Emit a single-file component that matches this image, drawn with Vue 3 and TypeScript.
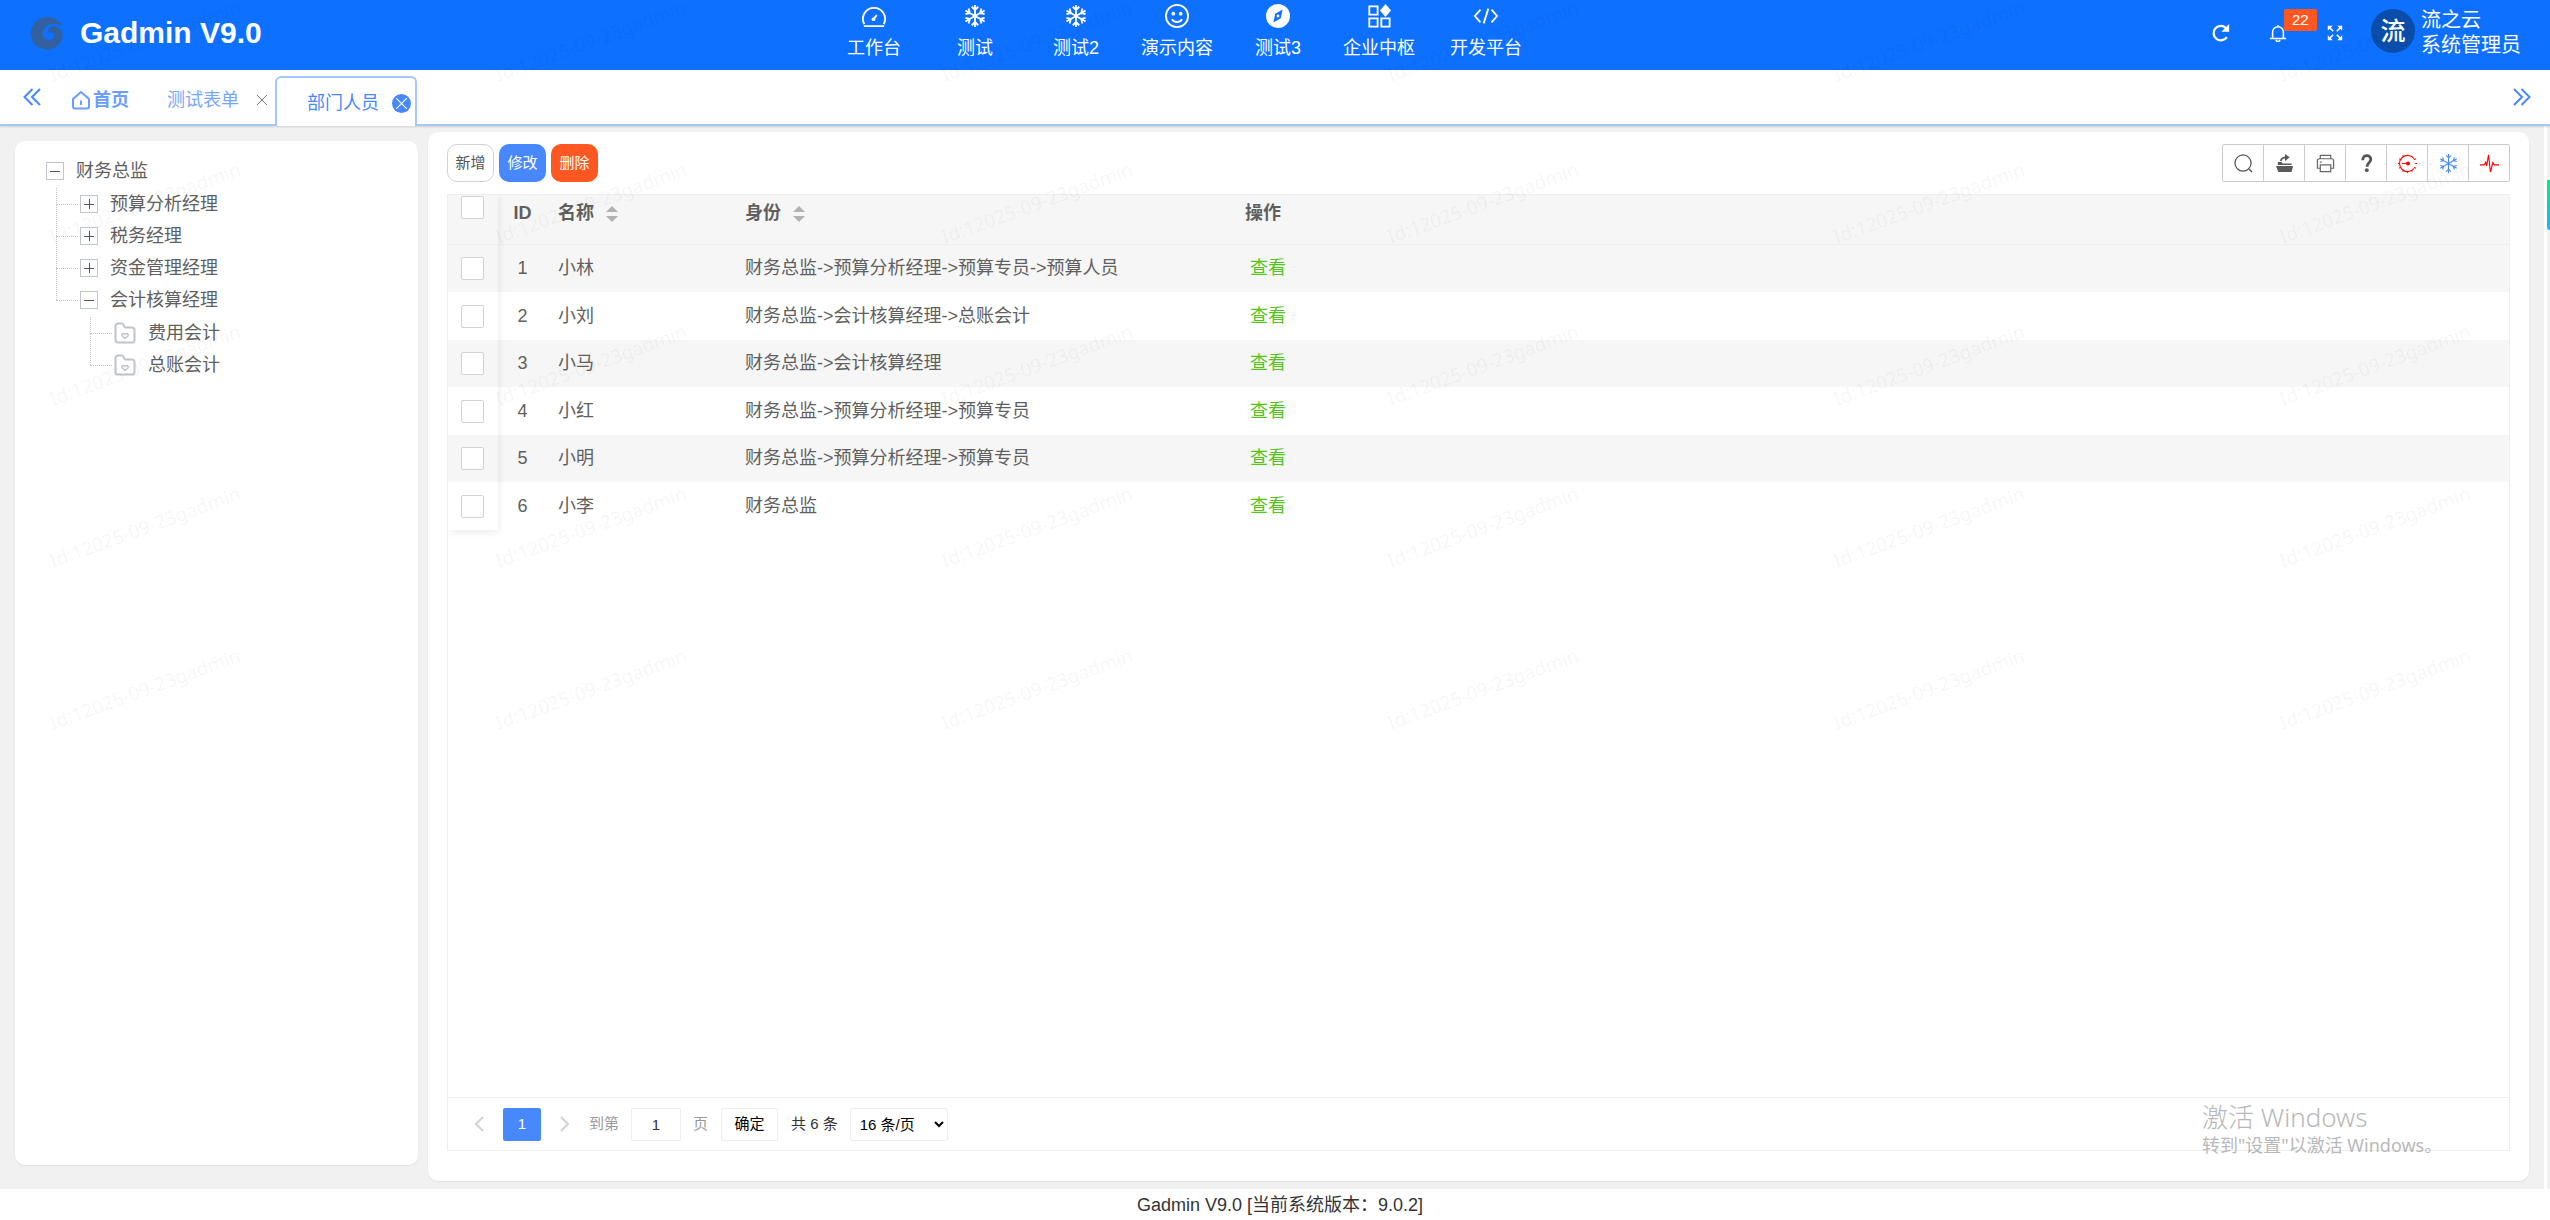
<script setup lang="ts">
import { ref } from 'vue'

interface NavItem { label: string; icon: string }
interface TreeNode { label: string; open?: boolean; children?: TreeNode[] }
interface Person { id: number; name: string; role: string }

const nav: NavItem[] = [
  { label: '工作台', icon: 'gauge' },
  { label: '测试', icon: 'snow' },
  { label: '测试2', icon: 'snow' },
  { label: '演示内容', icon: 'smile' },
  { label: '测试3', icon: 'compass' },
  { label: '企业中枢', icon: 'blocks' },
]

const tree: TreeNode = {
  label: '财务总监',
  open: true,
  children: [
    { label: '预算分析经理' },
    { label: '税务经理' },
    { label: '资金管理经理' },
    { label: '会计核算经理', open: true, children: [{ label: '费用会计' }, { label: '总账会计' }] },
  ],
}

const people: Person[] = [
  { id: 1, name: '小林', role: '财务总监->预算分析经理->预算专员->预算人员' },
  { id: 2, name: '小刘', role: '财务总监->会计核算经理->总账会计' },
  { id: 3, name: '小马', role: '财务总监->会计核算经理' },
  { id: 4, name: '小红', role: '财务总监->预算分析经理->预算专员' },
  { id: 5, name: '小明', role: '财务总监->预算分析经理->预算专员' },
  { id: 6, name: '小李', role: '财务总监' },
]

const page = ref(1)
const pageSize = ref('16')
const flakeArms = [0, 60, 120, 180, 240, 300]
const dialTicks = [40, 70, 100, 130, 160, 190, 220, 250, 280, 310]
</script>

<template>
  <div class="app">
    <header class="topbar">
      <div class="brand">
        <svg class="logo" viewBox="0 0 34 34" aria-hidden="true">
          <path fill="#33619f" d="M33 11C29 3 20-1 12 2 4 5-1 13 1 21c2 9 11 14 20 12 8-2 13-9 11-16-1-5-6-8-11-6-3 1-4 5-1 6 1-1 3-1 4 1 1 3-1 6-5 6-4 0-7-4-6-8 1-6 7-9 13-8 3 0 6 2 7 3z" />
        </svg>
        <h1>Gadmin V9.0</h1>
      </div>

      <nav class="mainnav">
        <ul>
          <li v-for="n in nav" :key="n.label">
            <a href="#">
              <svg v-if="n.icon === 'gauge'" viewBox="0 0 28 26" aria-hidden="true">
                <path class="ln" d="M3.500 22A12 12 0 1 1 24.500 22M3 24h22M13 17l4-5" />
                <circle cx="13.500" cy="16.500" r="2" fill="currentColor" />
              </svg>
              <svg v-else-if="n.icon === 'snow'" viewBox="0 0 28 26" aria-hidden="true">
                <g v-for="a in flakeArms" :key="a" :transform="`rotate(${a} 14 13)`">
                  <path class="ln" d="M14 13V1M10.500 3l3.500 3.500L17.500 3" />
                </g>
              </svg>
              <svg v-else-if="n.icon === 'smile'" viewBox="0 0 28 26" aria-hidden="true">
                <circle class="ln" cx="14" cy="13" r="12" />
                <path class="ln" d="M8.500 16.500c2.500 4 8.500 4 11 0" />
                <circle cx="10" cy="10.500" r="2" fill="currentColor" />
                <circle cx="18" cy="10.500" r="2" fill="currentColor" />
              </svg>
              <svg v-else-if="n.icon === 'compass'" viewBox="0 0 28 26" aria-hidden="true">
                <path fill="currentColor" fill-rule="evenodd" d="M14 0a13 13 0 1 0 0 26 13 13 0 0 0 0-26zM19 6l-2 9.500L9 20 11 10.500zM14 11.500a1.500 1.500 0 1 1 0 3 1.500 1.500 0 0 1 0-3z" />
              </svg>
              <svg v-else viewBox="0 0 28 26" aria-hidden="true">
                <path class="ln" d="M3.500 2.500h9v9h-9zM3.500 15.500h9v9h-9zM16.500 15.500h9v9h-9z" />
                <path fill="currentColor" d="M21 0l6 7-6 7-6-7z" />
              </svg>
              <span>{{ n.label }}</span>
            </a>
          </li>
        </ul>
        <a href="#" class="platform">
          <svg viewBox="0 0 28 26" aria-hidden="true">
            <path class="ln" d="M8 6l-6 7 6 7M20 6l6 7-6 7M16.500 5l-5 16" />
          </svg>
          <span>开发平台</span>
        </a>
      </nav>

      <div class="tools">
        <button type="button" aria-label="刷新">
          <svg viewBox="0 0 20 20"><path d="M16.500 14.500A8 8 0 1 1 15.500 4.500" fill="none" stroke="currentColor" stroke-width="2.500" /><path d="M19 0v8.500h-8.500z" fill="currentColor" /></svg>
        </button>
        <button type="button" class="bell" aria-label="消息">
          <svg viewBox="0 0 20 20"><path d="M4 16V9a6 6 0 0 1 12 0v7M1 16.200h18M8 17.500a2 2 0 0 0 4 0M10 3V1" fill="none" stroke="currentColor" stroke-width="1.700" /></svg>
          <span class="badge">22</span>
        </button>
        <button type="button" aria-label="全屏">
          <svg viewBox="0 0 20 20"><path d="M8 8L3 3M12 8l5-5M8 12l-5 5M12 12l5 5" stroke="currentColor" stroke-width="1.800" /><path d="M2 2h5.500L2 7.500zM18 2h-5.500L18 7.500zM2 18h5.500L2 12.500zM18 18h-5.500l5.500-5.500z" fill="currentColor" /></svg>
        </button>
      </div>
      <a href="#" class="user">
        <span class="avatar">流</span>
        <span class="who"><span>流之云</span><span>系统管理员</span></span>
      </a>
    </header>

    <div class="tabs">
      <button type="button" class="scroll" aria-label="向左">
        <svg viewBox="0 0 18 18"><path d="M9.500 1l-8 8 8 8M17 1L9 9l8 8" /></svg>
      </button>
      <div class="tablist">
        <a href="#" class="home">
          <svg viewBox="0 0 20 20" aria-hidden="true"><path d="M2 9l8-7 8 7v7.500a2 2 0 0 1-2 2H4a2 2 0 0 1-2-2zM10 10.500v4.500" /></svg>
          <span>首页</span>
        </a>
        <div class="tab">
          <a href="#">测试表单</a>
          <button type="button" class="x" aria-label="关闭测试表单"><svg viewBox="0 0 10 10"><path d="M0 0l10 10M10 0L0 10" /></svg></button>
        </div>
        <div class="tab active">
          <a href="#">部门人员</a>
          <button type="button" class="x" aria-label="关闭部门人员"><svg viewBox="0 0 10 10"><path d="M0 0l10 10M10 0L0 10" /></svg></button>
        </div>
      </div>
      <button type="button" class="scroll" aria-label="向右">
        <svg viewBox="0 0 18 18"><path d="M1 1l8 8-8 8M8.500 1l8 8-8 8" /></svg>
      </button>
    </div>

    <main class="body">
      <aside class="side">
        <div class="row">
          <button type="button" class="toggle open" :aria-label="tree.label"></button>
          <span>{{ tree.label }}</span>
        </div>
        <ul class="branch">
          <li v-for="node in tree.children" :key="node.label">
            <div class="row">
              <button type="button" class="toggle" :class="{ open: node.open }" :aria-label="node.label"></button>
              <span>{{ node.label }}</span>
            </div>
            <ul v-if="node.children" class="branch">
              <li v-for="leaf in node.children" :key="leaf.label">
                <div class="row">
                  <svg class="folder" viewBox="0 0 22 22" aria-hidden="true">
                    <path stroke-width="2" d="M1.500 4a2.500 2.500 0 0 1 2.500-2.500h4.500l2.500 4h7a2.500 2.500 0 0 1 2.500 2.500v10a2.500 2.500 0 0 1-2.500 2.500H4A2.500 2.500 0 0 1 1.500 18z" />
                    <path stroke-width="1.500" d="M11 16.500l-3-2.800c-1-1.800 1.500-3 3-1.200 1.500-1.800 4-.6 3 1.200z" />
                  </svg>
                  <span>{{ leaf.label }}</span>
                </div>
              </li>
            </ul>
          </li>
        </ul>
      </aside>

      <section class="panel">
        <div class="actions">
          <div class="btns">
            <button type="button" class="btn plain">新增</button>
            <button type="button" class="btn blue">修改</button>
            <button type="button" class="btn red">删除</button>
          </div>
          <div class="icons">
            <button type="button" aria-label="搜索"><svg viewBox="0 0 20 20"><circle cx="9.500" cy="9.500" r="8.500" fill="none" stroke="#555" stroke-width="1.300" /><path d="M16 16l3 3" stroke="#555" stroke-width="1.500" /></svg></button>
            <button type="button" aria-label="导出"><svg viewBox="0 0 20 20"><path fill="#5a5a5a" d="M1 12.500h18L17.500 19h-14zM3 11.500V8.500h4l1 1.500h9.500v1.500z" /><path d="M6 7.500c.5-3 2.500-4 6-4" fill="none" stroke="#5a5a5a" stroke-width="1.800" /><path fill="#5a5a5a" d="M10.500 0l5 3.500-5 4z" /></svg></button>
            <button type="button" aria-label="打印"><svg viewBox="0 0 20 20" fill="none" stroke="#666" stroke-width="1.300"><path d="M4.500 5V1.500h11V5M4.500 15H1.500V7a2 2 0 0 1 2-2h13a2 2 0 0 1 2 2v8h-3M4.500 11.500h11v7h-11zM4 8.500h2" /></svg></button>
            <button type="button" aria-label="帮助"><svg viewBox="0 0 20 20"><path d="M6 6.500C6 0 15 .5 14.500 6c-.3 3-4 3.500-4 7.500" fill="none" stroke="#555" stroke-width="3" /><circle cx="10.300" cy="17" r="2" fill="#555" /></svg></button>
            <button type="button" aria-label="仪表"><svg viewBox="0 0 20 20" fill="none" stroke="#f00" stroke-width="1.200"><path d="M17 5A8.500 8.500 0 1 0 17 15M4 10h6" /><path v-for="t in dialTicks" :key="t" d="M10 0v2" :transform="`rotate(${-t + 10} 10 10)`" /><circle cx="10.500" cy="10" r="1.500" fill="#f00" /></svg></button>
            <button type="button" aria-label="雪花"><svg viewBox="0 0 20 20" fill="none" stroke="#4788ff" stroke-width="1.200"><g v-for="a in flakeArms" :key="a" :transform="`rotate(${a} 10 10)`"><path d="M10 10V0M7.500 1.500L10 4l2.500-2.500" /></g></svg></button>
            <button type="button" aria-label="监控"><svg viewBox="0 0 20 20" fill="none" stroke="#f00" stroke-width="1.200"><path d="M0 11.500h4.500L6 8.500l1 4L9 1l2 18 2.500-10 1.500 2.500h5" /></svg></button>
          </div>
        </div>

        <div class="grid">
          <div class="gridbody">
            <table>
              <colgroup><col class="c1" /><col class="c2" /><col class="c3" /><col class="c4" /><col /></colgroup>
              <thead>
                <tr>
                  <th class="pick"><input type="checkbox" aria-label="全选" /></th>
                  <th class="num">ID</th>
                  <th>名称<i class="sort"></i></th>
                  <th>身份<i class="sort"></i></th>
                  <th>操作</th>
                </tr>
              </thead>
              <tbody>
                <tr v-for="p in people" :key="p.id">
                  <td class="pick"><input type="checkbox" :aria-label="p.name" /></td>
                  <td class="num">{{ p.id }}</td>
                  <td>{{ p.name }}</td>
                  <td>{{ p.role }}</td>
                  <td><a href="#" class="view">查看</a></td>
                </tr>
              </tbody>
            </table>
            <div class="pinshade"></div>
          </div>
          <div class="pager">
            <button type="button" class="arrow" aria-label="上一页"><svg viewBox="0 0 10 16"><path d="M9 1L2 8l7 7" /></svg></button>
            <button type="button" class="current">1</button>
            <button type="button" class="arrow" aria-label="下一页"><svg viewBox="0 0 10 16"><path d="M1 1l7 7-7 7" /></svg></button>
            <label for="goto">到第</label>
            <input id="goto" v-model="page" type="text" />
            <label for="goto">页</label>
            <button type="button" class="ok">确定</button>
            <span class="total">共 6 条</span>
            <select v-model="pageSize" aria-label="每页条数"><option value="16">16 条/页</option></select>
          </div>
        </div>
      </section>
      <div class="rail"><span></span></div>
    </main>

    <footer>Gadmin V9.0 [当前系统版本：9.0.2]</footer>

    <div class="marks" aria-hidden="true"><span v-for="i in 30" :key="i">Id:12025-09-23gadmin</span></div>
    <div class="activate"><strong>激活 Windows</strong><span>转到"设置"以激活 Windows。</span></div>
  </div>
</template>

<style>
body { margin: 0; }
</style>

<style scoped>
* { box-sizing: border-box; }
.app {
  position: relative;
  display: flex;
  flex-direction: column;
  min-height: 100vh;
  overflow: hidden;
  background: #fff;
  color: #5f5f5f;
  font-family: "Liberation Sans", "Noto Sans CJK SC", sans-serif;
  font-size: 18px;
  font-weight: 400;
  line-height: 24px;
}
button, input, select { font: inherit; }
button { padding: 0; border: 0; background: none; color: inherit; }
a { color: inherit; text-decoration: none; }
ul { margin: 0; padding: 0; list-style: none; }
svg { display: block; }

.topbar { display: flex; align-items: center; height: 70px; background: #0e70ff; color: #fff; }
.brand { display: flex; flex: 1; align-items: center; gap: 16px; padding: 0 0 4px 30px; }
.logo { width: 34px; height: 34px; }
h1 { margin: 0; font-size: 30px; line-height: 40px; font-weight: 700; }
.mainnav { display: flex; gap: 6px; }
.mainnav ul { display: flex; }
.mainnav a { display: flex; flex-direction: column; align-items: center; width: 101px; height: 70px; padding-top: 4px; }
.mainnav svg { width: 26px; height: 24px; }
.mainnav span { margin-top: 8px; }
.ln { fill: none; stroke: currentColor; stroke-width: 2; }
.tools { display: flex; flex: 1; justify-content: flex-end; gap: 39px; padding: 0 27px 4px 14px; }
.tools button { position: relative; width: 18px; }
.tools svg { width: 18px; height: 18px; }
.badge { position: absolute; left: 15px; top: -15px; padding: 0 8px; border-radius: 2px; background: #ff5722; font-size: 15px; line-height: 22px; }
.user { display: flex; align-items: center; gap: 6px; padding: 0 29px 8px 0; }
.avatar { width: 44px; height: 44px; border-radius: 50%; background: #0b4daa; text-align: center; font-size: 25px; line-height: 44px; font-weight: 500; }
.who { display: flex; flex-direction: column; padding-top: 4px; font-size: 20px; line-height: 25px; }

.tabs { display: flex; height: 56px; padding: 0 14px 0 18px; border-bottom: 2px solid #a6c6ff; box-shadow: 0 1px 2px #0002; background: #fff; color: #4788ff; z-index: 1; }
.scroll { width: 28px; height: 54px; padding: 0 5px; }
.scroll svg { width: 18px; height: 18px; fill: none; stroke: currentColor; stroke-width: 2; }
.tablist { display: flex; flex: 1; align-items: flex-end; }
.home { display: flex; align-items: center; gap: 2px; height: 48px; width: 110px; padding-left: 25px; color: #6a9dff; font-weight: 700; }
.home svg { width: 20px; height: 20px; fill: none; stroke: currentColor; stroke-width: 2; }
.tab { display: flex; align-items: center; justify-content: space-between; width: 119px; height: 48px; padding: 0 8px 0 11px; color: #78a6ff; }
.tab .x { color: #777; }
.x svg { width: 10px; height: 10px; fill: none; stroke: currentColor; stroke-width: 1; }
.active { width: 142px; height: 50px; margin-bottom: -2px; padding: 2px 4px 0 30px; border: 2px solid #a6c6ff; border-bottom: 0; border-radius: 6px 6px 0 0; background: #fff; color: #4788ff; }
.active .x { width: 19px; height: 19px; padding: 4px; border-radius: 50%; background: #4788ff; color: #fff; }
.active .x svg { width: 11px; height: 11px; }

.body { display: flex; flex: 1; padding: 0 0 0 15px; background: #f1f1f1; }
.side { width: 403px; margin: 15px 10px 24px 0; padding: 14px 31px; border-radius: 10px; background: #fff; box-shadow: 0 1px 2px #0001; }
.row { display: flex; align-items: center; gap: 12px; height: 32px; }
.toggle { width: 18px; height: 18px; border: 1px solid #c0c4cc; background: linear-gradient(#555, #555) center / 10px 1px no-repeat, linear-gradient(#555, #555) center / 1px 10px no-repeat; }
.toggle.open { background: linear-gradient(#555, #555) center / 10px 1px no-repeat; }
.branch { padding: 1px 0 0 34px; }
.branch li { position: relative; }
.branch li::before { content: ""; position: absolute; left: -24px; top: -16px; height: 32px; border-left: 1px dotted #c0c4cc; }
.branch li:first-child::before { top: 0; height: 17px; }
.branch .row::before { content: ""; position: absolute; left: -24px; top: 16px; width: 22px; border-top: 1px dotted #c0c4cc; }
.folder { width: 22px; height: 22px; fill: none; stroke: #c0c4cc; }

.panel { display: flex; flex: 1; flex-direction: column; min-width: 0; margin: 6px 15px 8px 0; padding: 12px 19px 30px; border-radius: 10px; background: #fff; box-shadow: 0 1px 2px #0001; }
.actions { display: flex; justify-content: space-between; height: 38px; margin-bottom: 12px; }
.btns { display: flex; gap: 5px; }
.btn { width: 47px; height: 38px; border-radius: 10px; font-size: 15px; color: #fff; }
.plain { border: 1px solid #d2d2d2; color: #555; }
.blue { background: #4788ff; }
.red { background: #ff5722; }
.icons { display: flex; border: 1px solid #ccc; border-radius: 2px; }
.icons button { display: flex; align-items: center; justify-content: center; width: 41px; border-right: 1px solid #ccc; }
.icons button:last-child { width: 40px; border-right: 0; }
.icons svg { width: 19px; height: 19px; }

.grid { display: flex; flex: 1; flex-direction: column; border: 1px solid #eee; }
.gridbody { position: relative; flex: 1; }
table { width: 100%; border-collapse: separate; border-spacing: 0; table-layout: fixed; }
.c1 { width: 50px; }
.c2 { width: 49px; }
.c3 { width: 187px; }
.c4 { width: 500px; }
th, td { padding: 0 11px; text-align: left; }
th { height: 50px; padding-bottom: 14px; border-bottom: 1px solid #eee; background: #f6f6f6; font-weight: 700; }
td { height: 48px; padding-bottom: 1px; }
tbody tr:nth-child(odd) td { height: 47px; background: #f6f6f6; }
.num { padding-left: 0; padding-right: 0; text-align: center; }
.pick { padding: 0 0 0 13px; vertical-align: middle; }
th.pick { padding-bottom: 24px; }
.pick input { display: block; appearance: none; width: 23px; height: 23px; margin: 0; border: 1px solid #d2d2d2; border-radius: 2px; background: #fff; }
.pinshade { position: absolute; left: 0; top: 0; width: 50px; height: 335px; box-shadow: 1px 2px 8px #00000014; clip-path: inset(0 -12px -12px 0); }
.sort { display: inline-flex; flex-direction: column; gap: 4px; margin-left: 12px; vertical-align: middle; }
.sort::before, .sort::after { content: ""; border: 6px solid transparent; }
.sort::before { border-top: 0; border-bottom: 6px solid #b2b2b2; }
.sort::after { border-bottom: 0; border-top: 6px solid #b2b2b2; }
.view { margin-left: 5px; color: #52c41a; }

.pager { display: flex; align-items: center; height: 53px; padding: 0 0 0 17px; border-top: 1px solid #eee; font-size: 15px; }
.arrow { width: 28px; height: 33px; padding: 0 9px; }
.arrow svg { width: 10px; height: 16px; fill: none; stroke: #d2d2d2; stroke-width: 2; }
.current { width: 38px; height: 33px; margin: 0 10px; border-radius: 2px; background: #4788ff; color: #fff; }
.pager label { margin-left: 12px; color: #999; }
.arrow + label { margin-left: 10px; }
.pager input { width: 50px; height: 33px; margin-left: 12px; border: 1px solid #eee; border-radius: 2px; text-align: center; color: #333; }
.ok { width: 57px; height: 33px; margin: 0 13px; border: 1px solid #eee; border-radius: 2px; color: #000; }
.total { color: #333; }
.pager select { width: 98px; height: 33px; margin-left: 12px; padding: 0 0 0 5px; border: 1px solid #eee; border-radius: 2px; background: #fff; color: #000; }

.rail { width: 6px; border-left: 3px solid #fff; padding-top: 54px; }
.rail span { display: block; height: 50px; border-radius: 0 0 0 4px; background: linear-gradient(#00f07a, #1cb0ff); }
footer { height: 31px; padding: 4px 0 0 10px; text-align: center; color: #333; }

.marks { position: absolute; z-index: 5; left: 38px; top: 28px; display: grid; grid-template-columns: repeat(6, 446px); grid-auto-rows: 162px; pointer-events: none; color: rgba(0, 0, 0, 0.05); font-family: "Noto Sans", sans-serif; font-size: 19px; line-height: 26px; }
.marks span { width: 214px; height: 26px; text-align: center; white-space: nowrap; transform: rotate(-20deg); }
.activate { position: absolute; z-index: 6; right: 116px; bottom: 63px; display: flex; flex-direction: column; pointer-events: none; color: #b8b8b8; font-family: "Noto Sans", "Noto Sans CJK SC", sans-serif; width: 232px; font-size: 18px; line-height: 24px; white-space: nowrap; }
.activate strong { font-size: 26px; line-height: 32px; font-weight: 300; }
</style>
